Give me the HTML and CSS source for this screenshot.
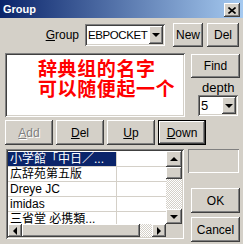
FILE: index.html
```html
<!DOCTYPE html>
<html lang="zh">
<head>
    <meta charset="UTF-8">
    <title>Group</title>
    <link rel="stylesheet" href="styles.css">
</head>
<body>
    <div class="window">
        <div class="titlebar">
            <span class="title">Group</span>
            <button class="close-btn">
                <svg width="8" height="7" viewBox="0 0 8 7">
                    <path d="M0.5 0.5L7.5 6.5M7.5 0.5L0.5 6.5" stroke="#000" stroke-width="1.6" fill="none"/>
                </svg>
            </button>
        </div>

        <div class="content">
            <div class="top-row">
                <span class="field-label"><u>G</u>roup</span>
                <div class="combo group-combo">
                    <span class="combo-text">EBPOCKET</span>
                    <span class="combo-btn"><i class="arrow-down"></i></span>
                </div>
                <button class="btn new-btn">New</button>
                <button class="btn del-top-btn">Del</button>
            </div>

            <div class="mid-row">
                <div class="name-box">
                    <p>辞典组的名字</p>
                    <p>可以随便起一个</p>
                </div>
                <div class="side-col">
                    <button class="btn find-btn">Find</button>
                    <span class="depth-label">depth</span>
                    <div class="combo depth-combo">
                        <span class="combo-text">5</span>
                        <span class="combo-btn"><i class="arrow-down"></i></span>
                    </div>
                </div>
            </div>

            <div class="action-row">
                <button class="btn action-btn" disabled><u>A</u>dd</button>
                <button class="btn action-btn"><u>D</u>el</button>
                <button class="btn action-btn"><u>U</u>p</button>
                <button class="btn action-btn default"><u>D</u>own</button>
            </div>

            <div class="list-row">
                <div class="dict-list">
                    <div class="rows">
                        <div class="row selected"><span class="cell name">小学館「中日／...</span><span class="cell extra"></span></div>
                        <div class="row"><span class="cell name">広辞苑第五版</span><span class="cell extra"></span></div>
                        <div class="row"><span class="cell name">Dreye JC</span><span class="cell extra"></span></div>
                        <div class="row"><span class="cell name">imidas</span><span class="cell extra"></span></div>
                        <div class="row"><span class="cell name">三省堂 必携類...</span><span class="cell extra"></span></div>
                    </div>
                    <div class="vscroll">
                        <span class="sb-btn up-btn"><i class="arrow-up"></i></span>
                        <span class="thumb v-thumb"></span>
                        <span class="track"></span>
                        <span class="sb-btn down-btn"><i class="arrow-down"></i></span>
                    </div>
                    <div class="hscroll">
                        <span class="sb-btn left-btn"><i class="arrow-left"></i></span>
                        <span class="thumb h-thumb"></span>
                        <span class="track"></span>
                        <span class="sb-btn right-btn"><i class="arrow-right"></i></span>
                    </div>
                    <div class="corner"></div>
                </div>
                <div class="side-col">
                    <div class="info-box"></div>
                    <button class="btn ok-btn">OK</button>
                    <button class="btn cancel-btn">Cancel</button>
                </div>
            </div>
        </div>
    </div>
</body>
</html>
```

FILE: styles.css
```css
* {
    margin: 0;
    padding: 0;
    box-sizing: border-box;
}

body {
    width: 243px;
    height: 244px;
    overflow: hidden;
    background: #d4d0c8;
    font-family: 'Liberation Sans', 'Noto Sans CJK JP', sans-serif;
    font-size: 12px;
    color: #000;
}

/* title bar */
.titlebar {
    height: 18px;
    padding: 0 3px;
    display: flex;
    justify-content: space-between;
    background: linear-gradient(90deg, #0a246a, #a6caf0);
}

.title {
    color: #fff;
    font-weight: bold;
    font-size: 11px;
    line-height: 18px;
}

.close-btn {
    width: 16px;
    height: 14px;
    margin-top: 3px;
    border: none;
    background: #d4d0c8;
    display: flex;
    align-items: center;
    justify-content: center;
    box-shadow: inset -1px -1px #404040, inset 1px 1px #fff, inset -2px -2px #808080;
}

/* generic 3d controls */
.btn {
    border: none;
    background: #d4d0c8;
    font-family: 'Liberation Sans', sans-serif;
    font-size: 12px;
    color: #000;
    display: flex;
    align-items: center;
    justify-content: center;
    box-shadow: inset -1px -1px #404040, inset 1px 1px #fff, inset -2px -2px #808080, inset 2px 2px #d4d0c8;
}

.btn:disabled {
    color: #808080;
    text-shadow: 1px 1px #fff;
}

.btn.default {
    box-shadow: inset 0 0 0 1px #000, inset -2px -2px #404040, inset 2px 2px #fff, inset -3px -3px #808080;
}

.content {
    padding: 5px 0 0 5px;
}

/* row 1 */
.top-row {
    height: 24px;
    display: flex;
    align-items: center;
    justify-content: flex-end;
    padding-right: 4px;
}

.field-label {
    font-size: 12px;
}

.combo {
    background: #fff;
    display: flex;
    align-items: center;
    justify-content: space-between;
    padding: 2px;
    box-shadow: inset 1px 1px #808080, inset -1px -1px #fff, inset 2px 2px #404040, inset -2px -2px #d4d0c8;
}

.combo-text {
    padding-left: 1px;
    font-size: 11.5px;
    letter-spacing: -0.4px;
    white-space: nowrap;
}

.combo-btn {
    width: 14px;
    flex: none;
    align-self: stretch;
    background: #d4d0c8;
    display: flex;
    align-items: center;
    justify-content: center;
    box-shadow: inset -1px -1px #404040, inset 1px 1px #fff, inset -2px -2px #808080;
}

.group-combo {
    width: 80px;
    height: 22px;
    margin-left: 6px;
}

.new-btn {
    width: 30px;
    height: 24px;
    margin-left: 8px;
}

.del-top-btn {
    width: 32px;
    height: 24px;
    margin-left: 4px;
}

/* row 2 */
.mid-row {
    display: flex;
    margin-top: 6px;
}

.name-box {
    width: 180px;
    height: 64px;
    background: #fff;
    padding: 5px 0 0 33px;
    box-shadow: inset 1px 1px #808080, inset -1px -1px #fff, inset 2px 2px #404040, inset -2px -2px #d4d0c8;
    color: #f00;
    font-family: 'Noto Sans CJK SC', sans-serif;
    font-weight: bold;
    font-size: 19px;
    line-height: 20px;
    letter-spacing: 0.6px;
    white-space: nowrap;
}

.side-col {
    display: flex;
    flex-direction: column;
}

.mid-row .side-col {
    margin-left: 6px;
    width: 49px;
}

.find-btn {
    height: 24px;
    margin-top: 1px;
}

.depth-label {
    font-size: 13px;
    line-height: 14px;
    margin-top: 3px;
    padding-left: 11px;
}

.depth-combo {
    width: 40px;
    height: 21px;
    margin-left: 7px;
}

.depth-combo .combo-text {
    font-size: 13px;
}

/* row 3 */
.action-row {
    display: flex;
    gap: 3px;
    margin-top: 3px;
}

.action-btn {
    width: 48px;
    height: 25px;
}

/* row 4 */
.list-row {
    display: flex;
    margin-top: 4px;
}

.dict-list {
    width: 178px;
    height: 90px;
    margin-left: 1px;
    padding: 2px;
    background: #fff;
    display: grid;
    grid-template-columns: 158px 16px;
    grid-template-rows: 73px 13px;
    box-shadow: inset 1px 1px #808080, inset -1px -1px #fff, inset 2px 2px #404040, inset -2px -2px #d4d0c8;
}

.rows {
    overflow: hidden;
    padding-top: 1px;
    font-family: 'Liberation Sans', 'Noto Sans CJK JP', sans-serif;
    font-size: 12px;
}

.row {
    display: flex;
    height: 15px;
    border-bottom: 1px solid #d4d0c8;
}

.cell {
    line-height: 14px;
    white-space: nowrap;
    overflow: hidden;
}

.cell.name {
    width: 109px;
    padding-left: 2px;
    border-right: 1px solid #d4d0c8;
}

.cell.extra {
    flex: 1;
}

.row.selected .name {
    background: #0a246a;
    color: #fff;
}

.vscroll {
    display: flex;
    flex-direction: column;
}

.hscroll {
    display: flex;
}

.sb-btn, .thumb {
    background: #d4d0c8;
    display: flex;
    align-items: center;
    justify-content: center;
    box-shadow: inset -1px -1px #404040, inset 1px 1px #fff, inset -2px -2px #808080, inset 2px 2px #d4d0c8;
}

.track {
    flex: 1;
    background: repeating-conic-gradient(#fff 0 25%, #d4d0c8 0 50%) 0 0 / 2px 2px;
}

.up-btn { height: 16px; }
.v-thumb { height: 12px; }
.down-btn { height: 15px; }

.left-btn { width: 14px; }
.h-thumb { width: 118px; }
.right-btn { width: 14px; }

.corner {
    background: #d4d0c8;
}

.arrow-up, .arrow-down, .arrow-left, .arrow-right {
    width: 0;
    height: 0;
    display: block;
}

.arrow-up {
    border-left: 4px solid transparent;
    border-right: 4px solid transparent;
    border-bottom: 4px solid #000;
}

.arrow-down {
    border-left: 4px solid transparent;
    border-right: 4px solid transparent;
    border-top: 4px solid #000;
}

.arrow-left {
    border-top: 4px solid transparent;
    border-bottom: 4px solid transparent;
    border-right: 4px solid #000;
}

.arrow-right {
    border-top: 4px solid transparent;
    border-bottom: 4px solid transparent;
    border-left: 4px solid #000;
}

.list-row .side-col {
    margin-left: 4px;
    width: 52px;
}

.info-box {
    width: 51px;
    height: 24px;
    box-shadow: inset 1px 1px #808080, inset -1px -1px #fff;
}

.ok-btn {
    width: 49px;
    height: 25px;
    margin: 15px 0 0 3px;
}

.cancel-btn {
    width: 49px;
    height: 25px;
    margin: 4px 0 0 3px;
}
```
